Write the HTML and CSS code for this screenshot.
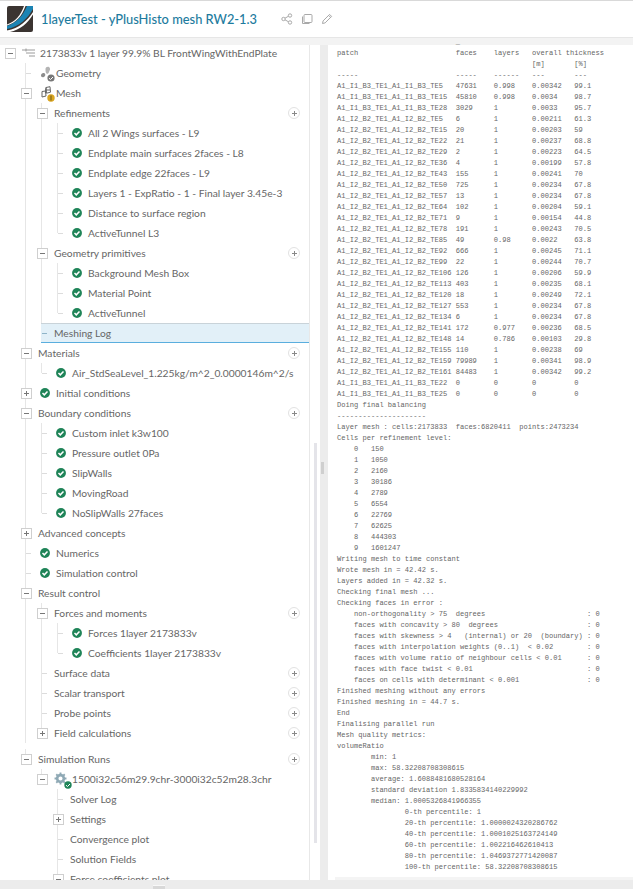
FILE: index.html
```html
<!DOCTYPE html>
<html lang="en">
<head>
<meta charset="utf-8">
<title>1layerTest - yPlusHisto mesh RW2-1.3</title>
<link rel="stylesheet" href="styles.css">
</head>
<body>
<svg class="sprite" aria-hidden="true">
  <symbol id="check" viewBox="0 0 12 12"><circle cx="6" cy="6" r="5.9" fill="#1f8458"/><path d="M3 6.100l2.100 2.100 3.900-4" fill="none" stroke="#fff" stroke-width="1.800"/></symbol>
</svg>
<header class="topbar">
  <svg class="logo" viewBox="0 0 26 26"><rect width="26" height="26" rx="2" fill="#3b3431"/><path d="M0 20C9 17 16 10 20 0h6v3C21 12 12 21 0 23z" fill="#1b84b4"/><path d="M0 24.500C12 22.500 21 14 26 6v2.500C21 17 13 24 3 26H0z" fill="#fff"/><path d="M0 18.500C8 16 14 9 17 0h1.500C15 10 9 17 0 19.500z" fill="#fff"/></svg>
  <h1 class="title">1layerTest - yPlusHisto mesh RW2-1.3</h1>
  <div class="actions">
    <svg class="action" viewBox="0 0 12 12"><circle cx="2.500" cy="6" r="1.700"/><circle cx="9" cy="2.500" r="1.700"/><circle cx="9" cy="9.500" r="1.700"/><path d="M4 5.200l3.500-2M4 6.800l3.500 2"/></svg>
    <svg class="action" viewBox="0 0 12 12"><rect x="3" y="1.500" width="8" height="8" rx="1"/><path d="M1.500 3.500v7h7"/></svg>
    <svg class="action" viewBox="0 0 12 12"><path d="M1.500 10.500l.6-2.600L8.600 1.400l2 2-6.500 6.500zM7.600 2.400l2 2"/></svg>
  </div>
</header>
<main class="workspace">
  <section class="left">
    <nav class="tree-pane">
      <ul class="tree root">
        <li>
          <div class="row"><span class="tg minus"></span>
            <svg class="ic-root" viewBox="0 0 14 10"><path d="M0 2h13M4 5h9M7 8h6" stroke="#9a9a9a" fill="none"/><path d="M4 .5v3" stroke="#9a9a9a"/></svg>
            <span class="lb">2173833v 1 layer 99.9% BL FrontWingWithEndPlate</span></div>
          <ul>
            <li><div class="row"><span class="tg leaf"></span>
              <span class="ic-wrap"><svg class="ic" viewBox="0 0 16 14"><path d="M5.500 3c0-2.500 4-3 4.500-.5.300 1.500-.5 2-1 3.500-.4 1.300-1.500 2.500-2.500 1.500C5.500 6.500 5.500 5 5.500 3z" fill="#b4b4b4"/><path d="M1 9.500C1 7.500 3 6.300 4.500 7.200 5.800 8 5.500 10.500 3.800 11 2.300 11.500 1 11 1 9.500z" fill="#8c8c8c"/></svg><svg class="badge" viewBox="0 0 8 8"><circle cx="4" cy="4" r="3.600" fill="#777"/><path d="M2 4.200l1.500 1.300 2.500-2.500" stroke="#fff" fill="none"/></svg></span>
              <span class="lb">Geometry</span></div></li>
            <li>
              <div class="row"><span class="tg minus"></span>
                <span class="ic-wrap"><svg class="ic" viewBox="0 0 16 14"><path d="M6 1.500l4-.8.500 5.500-4 1zM6 1.500l-.6 5.700M2 5.500l3.500-.5.500 5-4 1zM5 4h5" fill="none" stroke="#666"/></svg><svg class="badge warn" viewBox="0 0 8 8"><circle cx="4" cy="4" r="3.700" fill="#d9a520"/><path d="M4 1.500v5" stroke="#6b5a1c"/></svg></span>
                <span class="lb">Mesh</span></div>
              <ul>
                <li>
                  <div class="row"><span class="tg minus"></span><span class="lb">Refinements</span><span class="add"></span></div>
                  <ul>
                    <li><div class="row"><span class="tg leaf"></span><svg class="chk"><use href="#check"/></svg><span class="lb">All 2 Wings surfaces - L9</span></div></li>
                    <li><div class="row"><span class="tg leaf"></span><svg class="chk"><use href="#check"/></svg><span class="lb">Endplate main surfaces 2faces - L8</span></div></li>
                    <li><div class="row"><span class="tg leaf"></span><svg class="chk"><use href="#check"/></svg><span class="lb">Endplate edge 22faces - L9</span></div></li>
                    <li><div class="row"><span class="tg leaf"></span><svg class="chk"><use href="#check"/></svg><span class="lb">Layers 1 - ExpRatio - 1 - Final layer 3.45e-3</span></div></li>
                    <li><div class="row"><span class="tg leaf"></span><svg class="chk"><use href="#check"/></svg><span class="lb">Distance to surface region</span></div></li>
                    <li><div class="row"><span class="tg leaf"></span><svg class="chk"><use href="#check"/></svg><span class="lb">ActiveTunnel L3</span></div></li>
                  </ul>
                </li>
                <li>
                  <div class="row"><span class="tg minus"></span><span class="lb">Geometry primitives</span><span class="add"></span></div>
                  <ul>
                    <li><div class="row"><span class="tg leaf"></span><svg class="chk"><use href="#check"/></svg><span class="lb">Background Mesh Box</span></div></li>
                    <li><div class="row"><span class="tg leaf"></span><svg class="chk"><use href="#check"/></svg><span class="lb">Material Point</span></div></li>
                    <li><div class="row"><span class="tg leaf"></span><svg class="chk"><use href="#check"/></svg><span class="lb">ActiveTunnel</span></div></li>
                  </ul>
                </li>
                <li><div class="row selected"><span class="tg leaf"></span><span class="lb">Meshing Log</span></div></li>
              </ul>
            </li>
            <li>
              <div class="row"><span class="tg minus"></span><span class="lb">Materials</span><span class="add"></span></div>
              <ul>
                <li><div class="row"><span class="tg leaf"></span><svg class="chk"><use href="#check"/></svg><span class="lb">Air_StdSeaLevel_1.225kg/m^2_0.0000146m^2/s</span></div></li>
              </ul>
            </li>
            <li><div class="row"><span class="tg plus"></span><svg class="chk"><use href="#check"/></svg><span class="lb">Initial conditions</span></div></li>
            <li>
              <div class="row"><span class="tg minus"></span><span class="lb">Boundary conditions</span><span class="add"></span></div>
              <ul>
                <li><div class="row"><span class="tg leaf"></span><svg class="chk"><use href="#check"/></svg><span class="lb">Custom inlet k3w100</span></div></li>
                <li><div class="row"><span class="tg leaf"></span><svg class="chk"><use href="#check"/></svg><span class="lb">Pressure outlet 0Pa</span></div></li>
                <li><div class="row"><span class="tg leaf"></span><svg class="chk"><use href="#check"/></svg><span class="lb">SlipWalls</span></div></li>
                <li><div class="row"><span class="tg leaf"></span><svg class="chk"><use href="#check"/></svg><span class="lb">MovingRoad</span></div></li>
                <li><div class="row"><span class="tg leaf"></span><svg class="chk"><use href="#check"/></svg><span class="lb">NoSlipWalls 27faces</span></div></li>
              </ul>
            </li>
            <li><div class="row"><span class="tg plus"></span><span class="lb">Advanced concepts</span></div></li>
            <li><div class="row"><span class="tg leaf"></span><svg class="chk"><use href="#check"/></svg><span class="lb">Numerics</span></div></li>
            <li><div class="row"><span class="tg leaf"></span><svg class="chk"><use href="#check"/></svg><span class="lb">Simulation control</span></div></li>
            <li>
              <div class="row"><span class="tg minus"></span><span class="lb">Result control</span></div>
              <ul>
                <li>
                  <div class="row"><span class="tg minus"></span><span class="lb">Forces and moments</span><span class="add"></span></div>
                  <ul>
                    <li><div class="row"><span class="tg leaf"></span><svg class="chk"><use href="#check"/></svg><span class="lb">Forces 1layer 2173833v</span></div></li>
                    <li><div class="row"><span class="tg leaf"></span><svg class="chk"><use href="#check"/></svg><span class="lb">Coefficients 1layer 2173833v</span></div></li>
                  </ul>
                </li>
                <li><div class="row"><span class="tg leaf"></span><span class="lb">Surface data</span><span class="add"></span></div></li>
                <li><div class="row"><span class="tg leaf"></span><span class="lb">Scalar transport</span><span class="add"></span></div></li>
                <li><div class="row"><span class="tg leaf"></span><span class="lb">Probe points</span><span class="add"></span></div></li>
                <li><div class="row"><span class="tg plus"></span><span class="lb">Field calculations</span><span class="add"></span></div></li>
              </ul>
            </li>
            <li class="runs">
              <div class="row"><span class="tg minus"></span><span class="lb">Simulation Runs</span><span class="add"></span></div>
              <ul>
                <li>
                  <div class="row"><span class="tg minus"></span>
                    <span class="ic-wrap"><svg class="ic gear" viewBox="0 0 12 12"><circle cx="6" cy="6" r="3.100" fill="none" stroke="#8fa9b5" stroke-width="2.400"/><path d="M6 .5v2M6 9.500v2M.5 6h2M9.500 6h2M2.100 2.100l1.400 1.400M8.500 8.500l1.400 1.400M2.100 9.900l1.400-1.400M8.500 3.500l1.400-1.400" stroke="#8fa9b5" stroke-width="1.700"/></svg><svg class="badge ok" viewBox="0 0 8 8"><circle cx="4" cy="4" r="3.700" fill="#1f8458"/><path d="M2 4.200l1.500 1.300 2.500-2.500" stroke="#fff" fill="none"/></svg></span>
                    <span class="lb">1500i32c56m29.9chr-3000i32c52m28.3chr</span></div>
                  <ul>
                    <li><div class="row"><span class="tg leaf"></span><span class="lb">Solver Log</span></div></li>
                    <li><div class="row"><span class="tg plus"></span><span class="lb">Settings</span></div></li>
                    <li><div class="row"><span class="tg leaf"></span><span class="lb">Convergence plot</span></div></li>
                    <li><div class="row"><span class="tg leaf"></span><span class="lb">Solution Fields</span></div></li>
                    <li><div class="row"><span class="tg minus"></span><span class="lb">Force coefficients plot</span></div></li>
                  </ul>
                </li>
              </ul>
            </li>
          </ul>
        </li>
      </ul>
    </nav>
    <div class="scroll"><div class="thumb"></div></div>
  </section>
  <div class="splitter"><div class="grip"></div></div>
  <section class="right">
<pre class="log">                            _
patch                       faces    layers   overall thickness
                                              [m]       [%]
-----                       -----    ------   ---       ---
A1_I1_B3_TE1_A1_I1_B3_TE5   47631    0.998    0.00342   99.1
A1_I1_B3_TE1_A1_I1_B3_TE15  45810    0.998    0.0034    98.7
A1_I1_B3_TE1_A1_I1_B3_TE28  3029     1        0.0033    95.7
A1_I2_B2_TE1_A1_I2_B2_TE5   6        1        0.00211   61.3
A1_I2_B2_TE1_A1_I2_B2_TE15  20       1        0.00203   59
A1_I2_B2_TE1_A1_I2_B2_TE22  21       1        0.00237   68.8
A1_I2_B2_TE1_A1_I2_B2_TE29  2        1        0.00223   64.5
A1_I2_B2_TE1_A1_I2_B2_TE36  4        1        0.00199   57.8
A1_I2_B2_TE1_A1_I2_B2_TE43  155      1        0.00241   70
A1_I2_B2_TE1_A1_I2_B2_TE50  725      1        0.00234   67.8
A1_I2_B2_TE1_A1_I2_B2_TE57  13       1        0.00234   67.8
A1_I2_B2_TE1_A1_I2_B2_TE64  102      1        0.00204   59.1
A1_I2_B2_TE1_A1_I2_B2_TE71  9        1        0.00154   44.8
A1_I2_B2_TE1_A1_I2_B2_TE78  191      1        0.00243   70.5
A1_I2_B2_TE1_A1_I2_B2_TE85  49       0.98     0.0022    63.8
A1_I2_B2_TE1_A1_I2_B2_TE92  666      1        0.00245   71.1
A1_I2_B2_TE1_A1_I2_B2_TE99  22       1        0.00244   70.7
A1_I2_B2_TE1_A1_I2_B2_TE106 126      1        0.00206   59.9
A1_I2_B2_TE1_A1_I2_B2_TE113 403      1        0.00235   68.1
A1_I2_B2_TE1_A1_I2_B2_TE120 18       1        0.00249   72.1
A1_I2_B2_TE1_A1_I2_B2_TE127 553      1        0.00234   67.8
A1_I2_B2_TE1_A1_I2_B2_TE134 6        1        0.00234   67.8
A1_I2_B2_TE1_A1_I2_B2_TE141 172      0.977    0.00236   68.5
A1_I2_B2_TE1_A1_I2_B2_TE148 14       0.786    0.00103   29.8
A1_I2_B2_TE1_A1_I2_B2_TE155 110      1        0.00238   69
A1_I2_B2_TE1_A1_I2_B2_TE159 79989    1        0.00341   98.9
A1_I2_B2_TE1_A1_I2_B2_TE161 84483    1        0.00342   99.2
A1_I1_B3_TE1_A1_I1_B3_TE22  0        0        0         0
A1_I1_B3_TE1_A1_I1_B3_TE25  0        0        0         0
Doing final balancing
---------------------
Layer mesh : cells:2173833  faces:6820411  points:2473234
Cells per refinement level:
    0   150
    1   1050
    2   2160
    3   30186
    4   2789
    5   6554
    6   22769
    7   62625
    8   444303
    9   1601247
Writing mesh to time constant
Wrote mesh in = 42.42 s.
Layers added in = 42.32 s.
Checking final mesh ...
Checking faces in error :
    non-orthogonality > 75  degrees                        : 0
    faces with concavity > 80  degrees                     : 0
    faces with skewness > 4   (internal) or 20  (boundary) : 0
    faces with interpolation weights (0..1)  &lt; 0.02        : 0
    faces with volume ratio of neighbour cells &lt; 0.01      : 0
    faces with face twist &lt; 0.01                           : 0
    faces on cells with determinant &lt; 0.001                : 0
Finished meshing without any errors
Finished meshing in = 44.7 s.
End
Finalising parallel run
Mesh quality metrics:
volumeRatio
        min: 1
        max: 58.32208708308615
        average: 1.6088481680528164
        standard deviation 1.8335834140229992
        median: 1.0005326841966355
                0-th percentile: 1
                20-th percentile: 1.0000024320286762
                40-th percentile: 1.0001025163724149
                60-th percentile: 1.002216462610413
                80-th percentile: 1.0469372771420087
                100-th percentile: 58.32208708308615
</pre>
    <div class="log-foot"></div>
  </section>
</main>
<footer class="bottom"><span class="bottom-grip"></span></footer>
</body>
</html>
```
FILE: styles.css
```css
* { box-sizing: border-box; }
html, body { margin: 0; height: 889px; overflow: hidden; }
body {
  background: #f3f3f3;
  font-family: Lato, "Open Sans", sans-serif;
  color: #666;
  display: flex;
  flex-direction: column;
}
.sprite { width: 0; height: 0; display: block; }

.topbar {
  height: 38px;
  flex: none;
  background: #fff;
  border-top: 1px solid #d9d9d9;
  border-bottom: 1px solid #e6e6e6;
  display: flex;
  align-items: center;
  padding: 0 0 1px 7px;
}
.logo { width: 26px; height: 26px; flex: none; }
.title {
  margin: 0 0 0 8px;
  font-size: 12.850px;
  font-weight: 500;
  color: #1d7b9e;
  white-space: nowrap;
}
.actions { display: flex; gap: 8px; margin-left: 24px; }
.action { width: 12px; height: 12px; fill: none; stroke: #a9a9a9; stroke-width: 1; }

.workspace { flex: 1; min-height: 0; margin-top: 7px; display: flex; }

.left { width: 320px; flex: none; background: #fff; display: flex; overflow: hidden; }
.tree-pane { width: 310px; flex: none; border-right: 1px solid #e8e8e8; overflow: hidden; }
.scroll { flex: 1; padding: 398px 3px 0 4px; }
.thumb { height: 400px; background: #e4e4e9; }

.tree, .tree ul { list-style: none; margin: 0; padding: 0; }
.tree ul { margin-left: 16px; }
.tree.root { padding-left: 2px; margin-top: -2px; }
.tree ul > li {
  background: linear-gradient(#e6e6e6, #e6e6e6) 7px 0 / 1px 100% no-repeat;
}
.tree ul > li:last-child { background-size: 1px 10px; }
.tree ul > li.runs { margin-top: 6px; }

.row {
  height: 20px;
  display: flex;
  align-items: center;
  font-size: 10.250px;
  white-space: nowrap;
}
.tg { width: 16px; height: 20px; flex: none; position: relative; margin-right: 4px; }
.tg.leaf { background: linear-gradient(#dcdcdc, #dcdcdc) 8px 10px / 5px 1px no-repeat; }
.tg.minus::before, .tg.plus::before {
  content: "";
  position: absolute;
  left: 3px;
  top: 5px;
  width: 9px;
  height: 9px;
  background:
    linear-gradient(#777, #777) center / 5px 1px no-repeat,
    #fff;
  border: 1px solid #cfcfcf;
}
.tg.plus::before {
  background:
    linear-gradient(#777, #777) center / 5px 1px no-repeat,
    linear-gradient(#777, #777) center / 1px 5px no-repeat,
    #fff;
}
.lb { color: #666; }

.chk { width: 10px; height: 10px; flex: none; margin: -1px 6px 0 2px; }
.ic-root { width: 14px; height: 10px; flex: none; margin: -1px 4px 0 0; }
.ic-wrap { width: 16px; height: 16px; flex: none; position: relative; margin: 0 0 0 2px; display: block; }
.ic { width: 16px; height: 14px; display: block; margin-top: 1px; }
.ic.gear { width: 13px; height: 13px; margin: 1px 0 0 -2px; }
.badge { width: 8px; height: 8px; position: absolute; right: 1px; bottom: -1px; }
.badge.warn { right: 1px; bottom: -1px; }
.badge.ok { right: 0; bottom: -2px; }

.add {
  width: 12px;
  height: 12px;
  margin-left: auto;
  margin-right: 9px;
  flex: none;
  border-radius: 50%;
  border: 1px solid #e2e2e2;
  background:
    linear-gradient(#888, #888) center / 5px 1px no-repeat,
    linear-gradient(#888, #888) center / 1px 5px no-repeat,
    #fff;
}
.row.selected {
  margin-left: 7px;
  background: #e2f0f8;
  border-top: 1px solid #c9d3d9;
  border-bottom: 1px solid #5aaede;
}
.row.selected .tg { width: 9px; margin-right: 4px; height: 18px; background: linear-gradient(#8fb4c8, #8fb4c8) 1px 9px / 5px 1px no-repeat; }

.splitter { width: 8px; flex: none; background: #ececec; padding: 417px 2px 0 1px; }
.grip { height: 12px; width: 3px; background: #cfcfcf; }

.right { flex: 1; min-width: 0; background: #fff; display: flex; flex-direction: column; }
.log {
  flex: 1;
  min-height: 0;
  overflow: hidden;
  margin: -8px 0 0;
  padding: 0 0 0 9px;
  font-family: "Liberation Mono", "DejaVu Sans Mono", monospace;
  font-size: 7.070px;
  line-height: 11px;
  color: #666;
}
.log-foot { height: 3px; flex: none; background: #f4f4f4; margin-left: 7px; }

.bottom {
  height: 9px;
  flex: none;
  background: #ececec;
  display: flex;
  justify-content: center;
  align-items: flex-end;
  padding-right: 316px;
}
.bottom-grip { width: 12px; height: 4px; background: #d8d8d8; border-top: 1px solid #f8f8f8; }
```
